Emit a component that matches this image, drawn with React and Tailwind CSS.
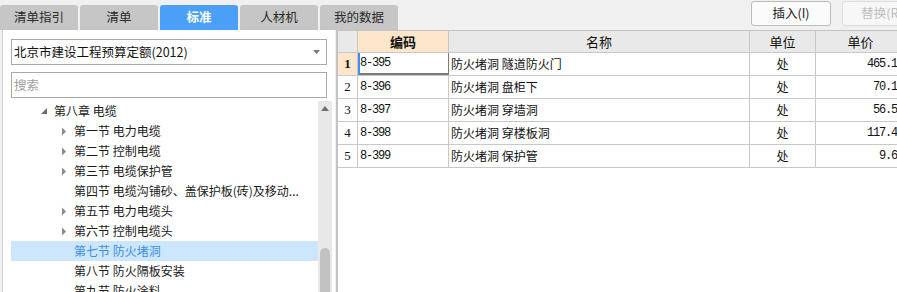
const tabs = ['清单指引', '清单', '标准', '人材机', '我的数据'];

const tree = [
  { text: '第八章 电缆', level: 0, arrow: 'open' },
  { text: '第一节 电力电缆', level: 1, arrow: 'closed' },
  { text: '第二节 控制电缆', level: 1, arrow: 'closed' },
  { text: '第三节 电缆保护管', level: 1, arrow: 'closed' },
  { text: '第四节 电缆沟铺砂、盖保护板(砖)及移动...', level: 1 },
  { text: '第五节 电力电缆头', level: 1, arrow: 'closed' },
  { text: '第六节 控制电缆头', level: 1, arrow: 'closed' },
  { text: '第七节 防火堵洞', level: 1, selected: true },
  { text: '第八节 防火隔板安装', level: 1 },
  { text: '第九节 防火涂料', level: 1 },
];

const rows = [
  ['8-395', '防火堵洞 隧道防火门', '处', '465.11'],
  ['8-396', '防火堵洞 盘柜下', '处', '70.12'],
  ['8-397', '防火堵洞 穿墙洞', '处', '56.54'],
  ['8-398', '防火堵洞 穿楼板洞', '处', '117.45'],
  ['8-399', '防火堵洞 保护管', '处', '9.61'],
];

const cjk = { fontFamily: '"Noto Sans CJK SC", "Liberation Sans", sans-serif' };
const mono = { fontFamily: '"Liberation Mono", monospace' };

function TreeRow({ item }) {
  return (
    <div className={`flex h-[20px] items-center ${item.selected ? 'bg-[#cce7fd] text-[#3a8ee8]' : 'text-[#1a1a1a]'}`}>
      <div className={`flex w-[14px] justify-center ${item.level === 0 ? 'ml-[26px]' : 'ml-[46px]'}`}>
        {item.arrow === 'open' && (
          <svg width="8" height="8" viewBox="0 0 8 8"><path d="M7 1 L7 7 L1 7 Z" fill="#6b6b6b" /></svg>
        )}
        {item.arrow === 'closed' && (
          <svg width="6" height="9" viewBox="0 0 6 9"><path d="M1 0.5 L5 4.5 L1 8.5 Z" fill="#8a8a8a" /></svg>
        )}
      </div>
      <span className="ml-[3px] whitespace-nowrap text-[12px] leading-none">{item.text}</span>
    </div>
  );
}

function Cell({ w, className = '', children }) {
  return (
    <div className={`flex h-full shrink-0 items-center border-r border-[#c8c8c8] ${w} ${className}`}>{children}</div>
  );
}

export default function App() {
  return (
    <div className="flex h-[292px] w-[897px] flex-col overflow-hidden bg-[#f0f0f0]" style={cjk}>
      <div className="flex h-[30px] shrink-0">
        <div className="flex items-end gap-[2px]">
          {tabs.map((t) => (
            <div
              key={t}
              className={`flex h-[25px] w-[78px] items-center justify-center rounded-t-[3px] text-[12.5px] ${
                t === '标准' ? 'bg-[#4c9ff7] font-bold text-white' : 'bg-[#c6c6c6] text-[#2a2a2a]'
              }`}
            >
              {t}
            </div>
          ))}
        </div>
        <div className="ml-auto flex items-start gap-[11px] pt-[1px]">
          <button className="h-[25px] w-[80px] rounded-[3px] border border-[#bcbcbc] bg-[#fbfbfb] text-[12.5px] text-[#222]">
            插入(I)
          </button>
          <button className="-mr-[25px] h-[25px] w-[80px] rounded-[3px] border border-[#dcdcdc] bg-[#f7f7f7] text-[12.5px] text-[#bdbdbd]">
            替换(R)
          </button>
        </div>
      </div>

      <div className="flex min-h-0 flex-1">
        <div className="ml-[2px] flex w-[333px] shrink-0 flex-col border-l border-[#cfcfcf] bg-white">
          <div className="mx-[8px] mt-[9px] flex h-[26px] items-center border border-[#a9a9a9] pl-[2px] pr-[6px]">
            <span className="flex-1 text-[12.5px] text-[#111]">北京市建设工程预算定额(2012)</span>
            <svg width="7" height="4" viewBox="0 0 7 4"><path d="M0 0 L7 0 L3.5 4 Z" fill="#7a7a7a" /></svg>
          </div>
          <div className="mx-[8px] mt-[7px] flex h-[26px] items-center border border-[#a9a9a9] pl-[2px]">
            <span className="text-[12.5px] text-[#a0a0a0]">搜索</span>
          </div>
          <div className="mt-[3px] flex min-h-0 flex-1 pl-[8px] pr-[3px]">
            <div className="flex-1 overflow-hidden">
              {tree.map((item) => (
                <TreeRow key={item.text} item={item} />
              ))}
            </div>
            <div className="flex w-[14px] shrink-0 flex-col items-center bg-[#e8e8e8]">
              <svg className="mt-[5px]" width="8" height="5" viewBox="0 0 8 5"><path d="M0 5 L4 0 L8 5 Z" fill="#707070" /></svg>
              <div className="mt-auto h-[44px] w-[10px] rounded-t-[5px] bg-[#c2c2c2]" />
            </div>
          </div>
        </div>

        <div className="ml-[1px] flex min-w-0 flex-1 flex-col border-l-2 border-t border-[#c4c4c4] bg-white">
          <div className="flex h-[22px] shrink-0 border-b border-[#c8c8c8] bg-[#e9e9e9] text-[13px] text-[#111]">
            <Cell w="w-[20px]" />
            <Cell w="w-[91px]" className="justify-center bg-[#fde6c9] font-bold">编码</Cell>
            <Cell w="w-[301px]" className="justify-center">名称</Cell>
            <Cell w="w-[66px]" className="justify-center">单位</Cell>
            <Cell w="w-[90px]" className="justify-center">单价</Cell>
          </div>
          {rows.map((r, i) => (
            <div key={r[0]} className="flex h-[23px] shrink-0 border-b border-[#c8c8c8] text-[12px] text-[#111]">
              <Cell
                w="w-[20px]"
                className={`justify-center ${i === 0 ? 'bg-[#fde6c9] font-bold' : ''}`}
              >
                <span style={{ fontFamily: '"Liberation Serif", serif' }} className="text-[13px]">{i + 1}</span>
              </Cell>
              <Cell
                w="w-[91px]"
                className={i === 0 ? 'border-b-2 border-l-2 border-b-[#7a7a7a] border-l-[#3d8ef0] border-r-[#7a7a7a]' : 'pl-[2px]'}
              >
                <span className="text-[12px] tracking-[-1.2px]" style={mono}>{r[0]}</span>
              </Cell>
              <Cell w="w-[301px]" className="pl-[2px]">{r[1]}</Cell>
              <Cell w="w-[66px]" className="justify-center">{r[2]}</Cell>
              <Cell w="w-[90px]" className="justify-end pr-[2px]">
                <span className="text-[12px] tracking-[-1.2px]" style={mono}>{r[3]}</span>
              </Cell>
            </div>
          ))}
        </div>
      </div>
    </div>
  );
}
